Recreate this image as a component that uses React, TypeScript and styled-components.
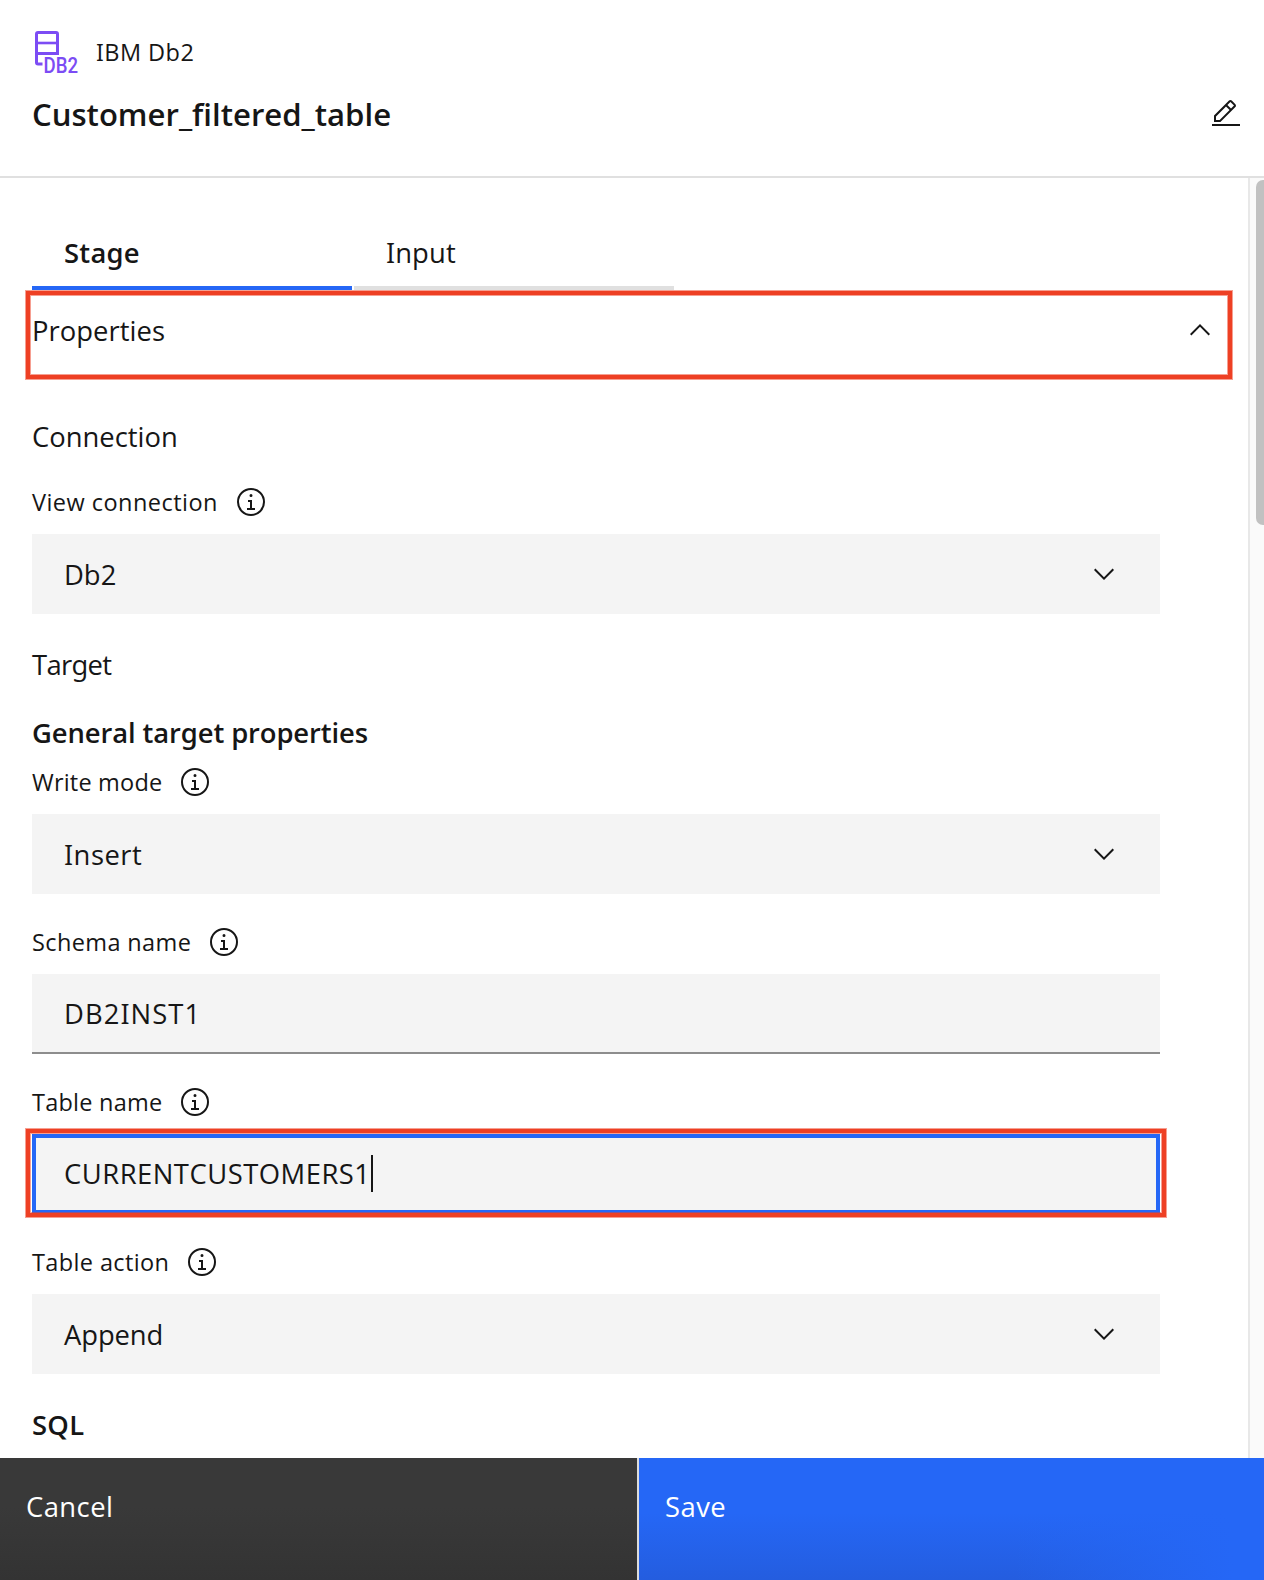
import React from 'react';
import styled, { createGlobalStyle, css } from 'styled-components';

const ink = '#161616';
const blue = '#2567f6';

const GlobalStyle = createGlobalStyle`
  * { box-sizing: border-box; }
  body {
    margin: 0;
    background: #fff;
    color: ${ink};
    font-family: 'Open Sans', 'Noto Sans', sans-serif;
    font-feature-settings: 'ss01' 1;
  }
`;

const Panel = styled.main`
  display: flex;
  flex-direction: column;
  width: 1264px;
  height: 1580px;
  overflow: hidden;
`;

const Text = styled.span<{ $track?: number; $small?: boolean }>`
  font-size: ${p => (p.$small ? 23.5 : 27.4)}px;
  letter-spacing: ${p => (p.$track ? `${p.$track}px` : 'normal')};
  white-space: nowrap;
`;

const Header = styled.header`
  flex: none;
  display: flex;
  flex-direction: column;
  gap: 22px;
  height: 178px;
  padding: 28px 22px 0 32px;
  border-bottom: 2px solid #e0e0e0;
`;

const StageType = styled.div`
  display: flex;
  align-items: center;
  gap: 16px;
  height: 48px;
`;

const TitleRow = styled.div`
  display: flex;
  align-items: center;
  justify-content: space-between;
  height: 32px;
`;

const Title = styled.h1`
  margin: 0;
  font-size: 31.1px;
  font-weight: 600;
  line-height: 32px;
`;

const IconButton = styled.button`
  display: flex;
  padding: 0;
  border: 0;
  background: none;
  color: inherit;
`;

const Body = styled.div`
  flex: 1;
  display: flex;
  min-height: 0;
  overflow: hidden;
`;

const Content = styled.div`
  flex: 1;
  padding: 48px 32px 0;
`;

const ScrollTrack = styled.div`
  flex: none;
  width: 16px;
  padding: 2px 0 0 6px;
  overflow: hidden;
  border-left: 2px solid #e8e8e8;
  background: #fafafa;
`;

const ScrollThumb = styled.div`
  width: 14px;
  height: 345px;
  border-radius: 7px;
  background: #c1c1c1;
`;

const Tabs = styled.div`
  display: flex;
  gap: 2px;
`;

const Tab = styled.button<{ $active?: boolean }>`
  display: flex;
  align-items: center;
  width: 320px;
  height: 64px;
  padding: 0 32px 6px;
  border: 0;
  border-bottom: 4px solid ${p => (p.$active ? blue : '#e0e0e0')};
  background: none;
  color: inherit;
  font-family: inherit;
  font-weight: ${p => (p.$active ? 600 : 400)};
  font-feature-settings: inherit;
  line-height: 52px;
`;

const marker = css`
  content: '';
  position: absolute;
  border: 4px solid #ee4024;
  box-shadow: 0 0 0 1px rgba(238, 64, 36, 0.5), inset 0 0 0 1px rgba(238, 64, 36, 0.5);
  pointer-events: none;
`;

const Accordion = styled.div`
  position: relative;
  display: flex;
  align-items: center;
  justify-content: space-between;
  height: 80px;
  &::after {
    ${marker}
    inset: 1px -16px -9px -6px;
  }
`;

const SectionTitle = styled.h2<{ $strong?: boolean; $top: number }>`
  display: flex;
  align-items: center;
  height: 36px;
  margin: ${p => p.$top}px 0 0;
  font-weight: ${p => (p.$strong ? 600 : 400)};
`;

const FieldGroup = styled.div<{ $top: number }>`
  width: 1128px;
  margin-top: ${p => p.$top}px;
`;

const Label = styled.label`
  display: flex;
  align-items: center;
  gap: 17px;
  height: 32px;
  margin-bottom: 16px;
`;

const Select = styled.div`
  display: flex;
  align-items: center;
  justify-content: space-between;
  height: 80px;
  padding: 0 40px 0 32px;
  background: #f4f4f4;
`;

const Input = styled.div<{ $focused?: boolean }>`
  position: relative;
  display: flex;
  align-items: center;
  height: 80px;
  padding: 0 32px;
  border-bottom: 2px solid #8d8d8d;
  background: #f4f4f4;
  ${p =>
    p.$focused &&
    css`
      padding: 0 28px 1px;
      border: 4px solid ${blue};
      &::after {
        ${marker}
        inset: -9px -10px -7px -10px;
      }
    `}
`;

const Caret = styled.i`
  width: 2px;
  height: 37px;
  background: ${ink};
`;

const Footer = styled.footer`
  flex: none;
  display: flex;
  height: 122px;
`;

const FooterButton = styled.button<{ $primary?: boolean }>`
  display: flex;
  align-items: flex-start;
  width: ${p => (p.$primary ? 627 : 637)}px;
  padding: 31px 26px 0;
  border: 0;
  border-left: ${p => (p.$primary ? '2px solid #dcdcdc' : '0')};
  background: ${p =>
    p.$primary
      ? `linear-gradient(to right, rgba(37,103,246,0) 60%, ${blue} 95%), linear-gradient(${blue} 45%, #245ddf)`
      : 'linear-gradient(#393939 40%, #333333)'};
  color: #fff;
  font-family: inherit;
  line-height: 36px;
`;

const EditIcon = () => (
  <svg width="32" height="32" viewBox="0 0 32 32" fill="currentColor">
    <path d="M2 26H30V28H2z" />
    <path d="M25.4 9c.8-.8.8-2 0-2.8l-3.6-3.6c-.8-.8-2-.8-2.8 0l-15 15V24h6.4L25.4 9zM20.4 4L24 7.6l-3 3L17.4 7 20.4 4zM6 22v-3.6l10-10 3.6 3.6-10 10H6z" />
  </svg>
);

const InfoIcon = () => (
  <svg width="32" height="32" viewBox="0 0 32 32" fill="currentColor">
    <path d="M17 22V14H13v2h2v6H12v2h8V22zM16 8a1.5 1.5 0 1 0 1.5 1.5A1.5 1.5 0 0 0 16 8z" />
    <path d="M16 30A14 14 0 1 1 30 16 14 14 0 0 1 16 30ZM16 4A12 12 0 1 0 28 16 12 12 0 0 0 16 4Z" />
  </svg>
);

const Chevron = ({ up }: { up?: boolean }) => (
  <svg width="32" height="32" viewBox="0 0 16 16" fill="currentColor">
    <path d={up ? 'M8 5L13 10 12.3 10.7 8 6.4 3.7 10.7 3 10z' : 'M8 11L3 6 3.7 5.3 8 9.6 12.3 5.3 13 6z'} />
  </svg>
);

const Logo = styled.svg`
  overflow: visible;
`;

const Db2Logo = () => (
  <Logo width="48" height="48" viewBox="0 0 48 48">
    <g fill="none" stroke="#7c4cf4" strokeWidth="3">
      <path d="M10.5 36H6Q4.5 36 4.5 34.5V6Q4.5 4.5 6 4.5H24Q25.5 4.5 25.5 6V25.5H4.5" />
      <path d="M4.5 15H25.5" strokeWidth="2.6" />
    </g>
    <text
      x="11.5"
      y="45"
      fill="#7c4cf4"
      fontFamily="Roboto, sans-serif"
      fontSize="22.5"
      fontWeight="500"
      textLength="34.5"
      lengthAdjust="spacingAndGlyphs"
    >
      DB2
    </text>
  </Logo>
);

type FieldProps = {
  label: string;
  labelTrack: number;
  value: string;
  track?: number;
  kind?: 'select' | 'input';
  focused?: boolean;
  top?: number;
};

const Field = ({ label, labelTrack, value, track, kind = 'select', focused, top = 32 }: FieldProps) => (
  <FieldGroup $top={top}>
    <Label>
      <Text $small $track={labelTrack}>{label}</Text>
      <InfoIcon />
    </Label>
    {kind === 'select' ? (
      <Select>
        <Text $track={track}>{value}</Text>
        <Chevron />
      </Select>
    ) : (
      <Input $focused={focused}>
        <Text $track={track}>{value}</Text>
        {focused && <Caret />}
      </Input>
    )}
  </FieldGroup>
);

export default function App() {
  return (
    <>
      <GlobalStyle />
      <Panel>
        <Header>
          <StageType>
            <Db2Logo />
            <Text $small $track={0.45}>IBM Db2</Text>
          </StageType>
          <TitleRow>
            <Title>Customer_filtered_table</Title>
            <IconButton aria-label="Edit name">
              <EditIcon />
            </IconButton>
          </TitleRow>
        </Header>
        <Body>
          <Content>
            <Tabs>
              <Tab $active>
                <Text $track={0.25}>Stage</Text>
              </Tab>
              <Tab>
                <Text $track={0.1}>Input</Text>
              </Tab>
            </Tabs>
            <Accordion>
              <Text $track={0.05}>Properties</Text>
              <Chevron up />
            </Accordion>
            <SectionTitle $top={48}>
              <Text>Connection</Text>
            </SectionTitle>
            <Field label="View connection" labelTrack={0.46} value="Db2" />
            <SectionTitle $top={32}>
              <Text $track={-0.7}>Target</Text>
            </SectionTitle>
            <SectionTitle $strong $top={32}>
              <Text $track={-0.1}>General target properties</Text>
            </SectionTitle>
            <Field label="Write mode" labelTrack={0.2} value="Insert" track={0.5} top={16} />
            <Field label="Schema name" labelTrack={0.38} value="DB2INST1" track={1.05} kind="input" />
            <Field label="Table name" labelTrack={0.24} value="CURRENTCUSTOMERS1" track={0.5} kind="input" focused />
            <Field label="Table action" labelTrack={0.38} value="Append" track={-0.1} />
            <SectionTitle $strong $top={32}>
              <Text $track={0.3}>SQL</Text>
            </SectionTitle>
          </Content>
          <ScrollTrack>
            <ScrollThumb />
          </ScrollTrack>
        </Body>
        <Footer>
          <FooterButton>
            <Text $track={0.45}>Cancel</Text>
          </FooterButton>
          <FooterButton $primary>
            <Text $track={0.45}>Save</Text>
          </FooterButton>
        </Footer>
      </Panel>
    </>
  );
}
